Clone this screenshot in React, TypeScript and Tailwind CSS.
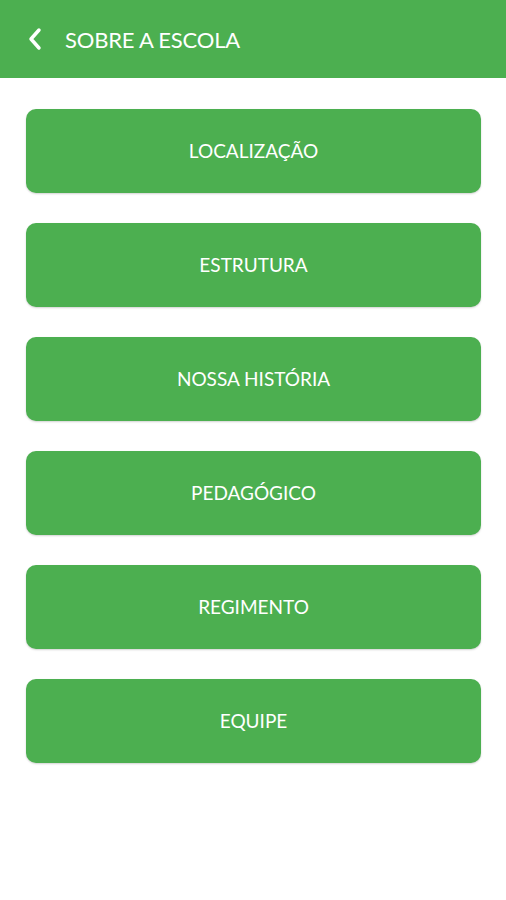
import React from 'react';

const items = ['LOCALIZAÇÃO', 'ESTRUTURA', 'NOSSA HISTÓRIA', 'PEDAGÓGICO', 'REGIMENTO', 'EQUIPE'];

export default function App() {
  return (
    <div className="min-h-[900px] bg-white" style={{ fontFamily: 'Lato, "Open Sans", sans-serif' }}>
      {/* Header */}
      <header className="h-[78px] bg-[#4caf50] flex items-center pl-[26px]">
        <svg width="18" height="24" viewBox="0 0 18 24" fill="none" className="mr-[21px]">
          <path d="M13 3 L5 12 L13 21" stroke="white" strokeWidth="3.5" strokeLinecap="round" strokeLinejoin="round" />
        </svg>
        <h1 className="text-white text-[22px] tracking-[-0.2px]">SOBRE A ESCOLA</h1>
      </header>

      <main className="flex flex-col gap-[30px] pl-[26px] pr-[25px] pt-[31px]">
        {items.map((item) => (
          <button
            key={item}
            className="h-[84px] w-full rounded-[10px] bg-[#4caf50] text-white text-[19px] shadow-[0_1px_2px_rgba(0,0,0,0.18)]"
          >
            {item}
          </button>
        ))}
      </main>
    </div>
  );
}
